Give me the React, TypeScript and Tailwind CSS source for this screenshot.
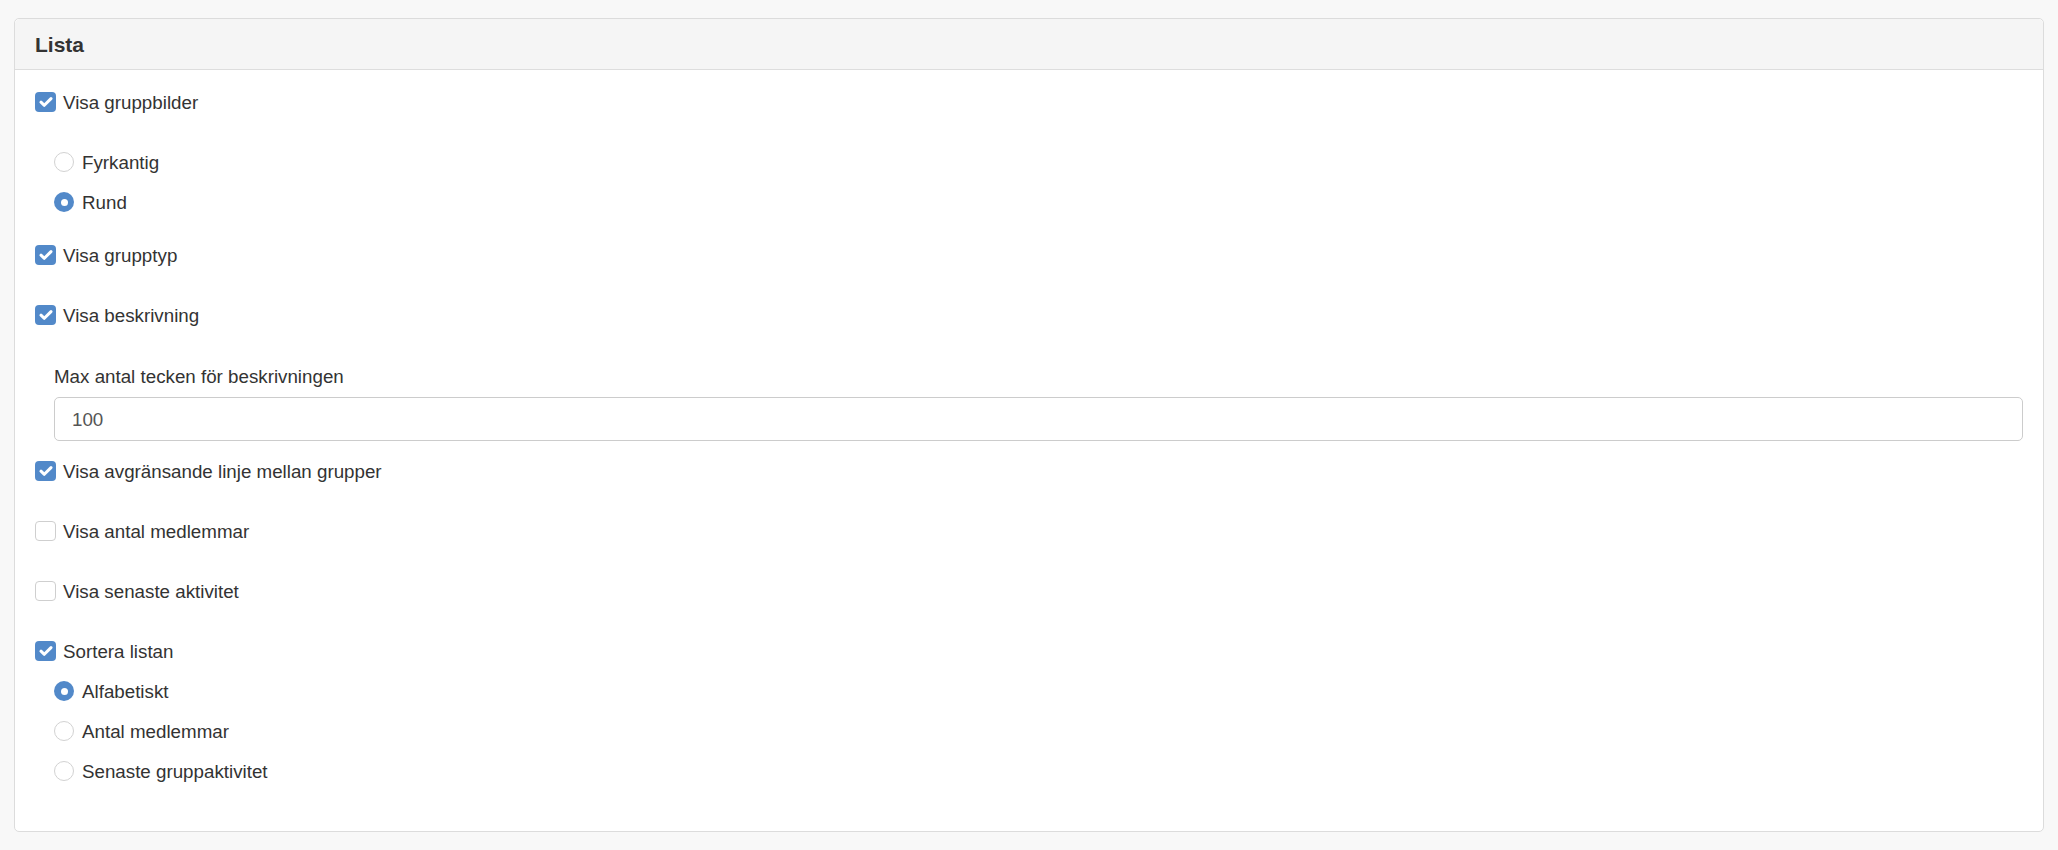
import React from "react";

function Check({ checked, label }: { checked: boolean; label: string }) {
  return (
    <div className="flex h-[40px] items-center">
      {checked ? (
        <span className="flex h-[20px] w-[21px] items-center justify-center rounded-[4px] bg-[#5289c9]">
          <svg width="14" height="12" viewBox="0 0 14 12">
            <path d="M2 6.2 L5.3 9.3 L12 2.6" fill="none" stroke="#fff" strokeWidth="3" strokeLinecap="round" strokeLinejoin="round" />
          </svg>
        </span>
      ) : (
        <span className="h-[20px] w-[21px] rounded-[4px] border border-[#cfcfcf] bg-white" />
      )}
      <span className="ml-[7px] pt-[2px] text-[18.75px] text-[#333]">{label}</span>
    </div>
  );
}

function Radio({ checked, label }: { checked: boolean; label: string }) {
  return (
    <div className="flex h-[40px] items-center pl-[19px]">
      {checked ? (
        <span className="flex h-[20px] w-[20px] items-center justify-center rounded-full bg-[#5289c9]">
          <span className="h-[7px] w-[7px] rounded-full bg-white" />
        </span>
      ) : (
        <span className="h-[20px] w-[20px] rounded-full border border-[#d2d2d2] bg-white" />
      )}
      <span className="ml-[8px] pt-[2px] text-[18.75px] text-[#333]">{label}</span>
    </div>
  );
}

export default function App() {
  return (
    <div className="min-h-[850px] w-full bg-[#f8f8f8] px-[14px] pt-[18px] font-['Liberation_Sans',Arial,sans-serif]">
      <div className="h-[814px] rounded-[5px] border border-[#dcdcdc] bg-white">
        <div className="flex h-[51px] items-center rounded-t-[5px] border-b border-[#dddddd] bg-[#f5f5f5] px-[20px]">
          <span className="pt-[2px] text-[21px] font-bold text-[#333]">Lista</span>
        </div>
        <div className="flex flex-col px-[20px] pt-[12px]">
          <Check checked label="Visa gruppbilder" />
          <div className="mt-[20px]">
            <Radio checked={false} label="Fyrkantig" />
            <Radio checked label="Rund" />
          </div>
          <div className="mt-[13px]">
            <Check checked label="Visa grupptyp" />
          </div>
          <div className="mt-[20px]">
            <Check checked label="Visa beskrivning" />
          </div>
          <div className="pl-[19px]">
            <div className="flex h-[62px] items-end pb-[6px] text-[18.75px] text-[#333]">Max antal tecken för beskrivningen</div>
            <div className="flex h-[44px] items-center rounded-[5px] border border-[#cccccc] px-[17px] pt-[2px] text-[18.75px] text-[#555]">
              100
            </div>
          </div>
          <div className="mt-[10px]">
            <Check checked label="Visa avgränsande linje mellan grupper" />
          </div>
          <div className="mt-[20px]">
            <Check checked={false} label="Visa antal medlemmar" />
          </div>
          <div className="mt-[20px]">
            <Check checked={false} label="Visa senaste aktivitet" />
          </div>
          <div className="mt-[20px]">
            <Check checked label="Sortera listan" />
            <Radio checked label="Alfabetiskt" />
            <Radio checked={false} label="Antal medlemmar" />
            <Radio checked={false} label="Senaste gruppaktivitet" />
          </div>
        </div>
      </div>
    </div>
  );
}
